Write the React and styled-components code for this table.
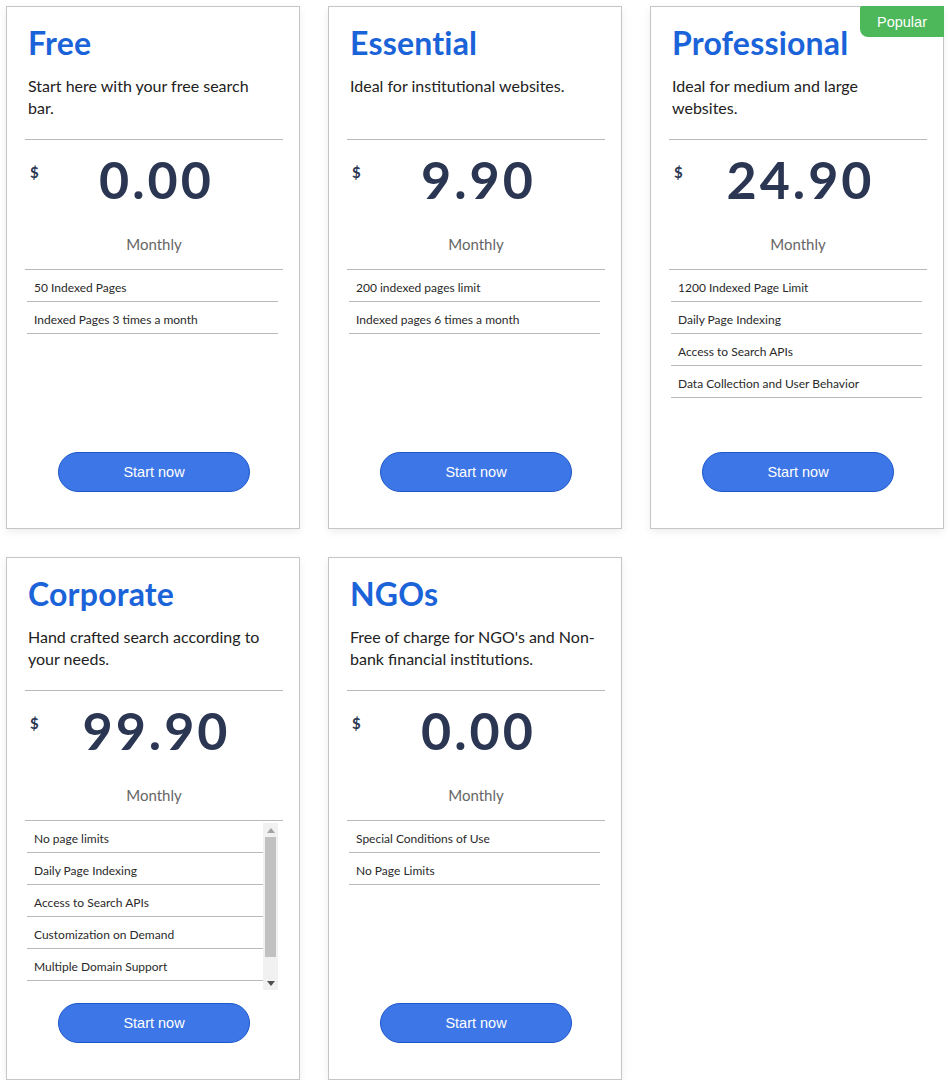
import React from "react";
import styled, { createGlobalStyle } from "styled-components";

const GlobalStyle = createGlobalStyle`
  html, body { margin: 0; padding: 0; background: #ffffff; }
  body { font-family: "Lato", "Liberation Sans", sans-serif; color: #222; }
  * { box-sizing: border-box; }
`;

const Page = styled.div`
  padding: 6px 0 0 6px;
`;

const Grid = styled.div`
  display: grid;
  grid-template-columns: repeat(3, 294px);
  column-gap: 28px;
  row-gap: 28px;
`;

const Card = styled.div`
  position: relative;
  width: 294px;
  height: 523px;
  border: 1px solid #c6c6c6;
  background: #fff;
  box-shadow: 0 3px 8px rgba(0, 0, 0, 0.07);
  padding: 18px 16px 36px 18px;
  display: flex;
  flex-direction: column;
`;

const Badge = styled.div`
  position: absolute;
  top: -1px;
  right: -1px;
  width: 84px;
  height: 31px;
  background: #4cb85a;
  color: #fff;
  font-family: "Liberation Sans", Arial, sans-serif;
  font-size: 14.5px;
  display: flex;
  align-items: center;
  justify-content: center;
  border-radius: 2px 0 0 8px;
`;

const Title = styled.h2`
  margin: 0 0 14px 3px;
  font-size: 32px;
  line-height: 36px;
  font-weight: 700;
  color: #1b63d8;
  letter-spacing: 0.2px;
`;

const Description = styled.p`
  margin: 0 0 20px 3px;
  min-height: 44px;
  font-size: 16px;
  line-height: 22px;
  color: #222;
  padding-right: 5px;
`;

const Divider = styled.div`
  height: 1px;
  background: #b9b9b9;
  flex: none;
`;

const PriceRow = styled.div`
  position: relative;
  margin-top: 11px;
  height: 60px;
  display: flex;
  justify-content: center;
  align-items: flex-start;
`;

const Currency = styled.span`
  position: absolute;
  left: 5px;
  top: 12px;
  font-size: 15px;
  font-weight: 700;
  color: #2b3652;
`;

const Amount = styled.span`
  font-size: 52px;
  line-height: 56px;
  font-weight: 700;
  color: #2b3652;
  letter-spacing: 3px;
  padding-left: 5px;
`;

const Period = styled.div`
  margin: 22px 0 14px;
  text-align: center;
  font-size: 15px;
  line-height: 22px;
  color: #666;
`;

const FeatureBox = styled.div`
  display: flex;
  margin: 0 5px 0 2px;
  height: 169px;
  flex: none;
`;

const Features = styled.ul`
  list-style: none;
  margin: 0;
  padding: 0;
  flex: 1;
  min-width: 0;
  overflow: hidden;
`;

const Feature = styled.li`
  height: 32px;
  padding: 10px 7px 0 7px;
  font-size: 12px;
  line-height: 16px;
  color: #2a2a2a;
  border-bottom: 1px solid #b9b9b9;
  white-space: nowrap;
`;

const ScrollBar = styled.div`
  width: 15px;
  margin-top: 2px;
  display: flex;
  flex-direction: column;
  background: #f1f1f1;
  flex: none;
`;

const ScrollArrow = styled.div`
  height: 14px;
  display: flex;
  align-items: center;
  justify-content: center;
  flex: none;
`;

const ScrollTrack = styled.div`
  flex: 1;
  padding: 0 2px;
`;

const ScrollThumb = styled.div`
  height: 120px;
  background: #c1c1c1;
`;

const Button = styled.button`
  margin: 13px auto 0;
  width: 192px;
  height: 40px;
  border-radius: 20px;
  border: 1px solid #1d58c9;
  background: #3d76e6;
  color: #fff;
  font-family: "Liberation Sans", Arial, sans-serif;
  font-size: 14.5px;
  cursor: pointer;
  flex: none;
`;

const Arrow = ({ up, color }) => (
  <svg width="8" height="5" viewBox="0 0 8 5">
    <polygon points={up ? "0,5 8,5 4,0" : "0,0 8,0 4,5"} fill={color} />
  </svg>
);

const plans = [
  {
    name: "Free",
    desc: "Start here with your free search bar.",
    price: "0.00",
    features: ["50 Indexed Pages", "Indexed Pages 3 times a month"],
  },
  {
    name: "Essential",
    desc: "Ideal for institutional websites.",
    price: "9.90",
    features: ["200 indexed pages limit", "Indexed pages 6 times a month"],
  },
  {
    name: "Professional",
    desc: "Ideal for medium and large websites.",
    price: "24.90",
    popular: true,
    features: [
      "1200 Indexed Page Limit",
      "Daily Page Indexing",
      "Access to Search APIs",
      "Data Collection and User Behavior",
    ],
  },
  {
    name: "Corporate",
    desc: "Hand crafted search according to your needs.",
    price: "99.90",
    scroll: true,
    features: [
      "No page limits",
      "Daily Page Indexing",
      "Access to Search APIs",
      "Customization on Demand",
      "Multiple Domain Support",
    ],
  },
  {
    name: "NGOs",
    desc: "Free of charge for NGO's and Non-bank financial institutions.",
    price: "0.00",
    features: ["Special Conditions of Use", "No Page Limits"],
  },
];

export default function App() {
  return (
    <Page>
      <GlobalStyle />
      <Grid>
        {plans.map((p) => (
          <Card key={p.name}>
            {p.popular && <Badge>Popular</Badge>}
            <Title>{p.name}</Title>
            <Description>{p.desc}</Description>
            <Divider />
            <PriceRow>
              <Currency>$</Currency>
              <Amount>{p.price}</Amount>
            </PriceRow>
            <Period>Monthly</Period>
            <Divider />
            <FeatureBox>
              <Features>
                {p.features.map((f) => (
                  <Feature key={f}>{f}</Feature>
                ))}
              </Features>
              {p.scroll && (
                <ScrollBar>
                  <ScrollArrow>
                    <Arrow up color="#a3a3a3" />
                  </ScrollArrow>
                  <ScrollTrack>
                    <ScrollThumb />
                  </ScrollTrack>
                  <ScrollArrow>
                    <Arrow color="#505050" />
                  </ScrollArrow>
                </ScrollBar>
              )}
            </FeatureBox>
            <Button>Start now</Button>
          </Card>
        ))}
      </Grid>
    </Page>
  );
}
